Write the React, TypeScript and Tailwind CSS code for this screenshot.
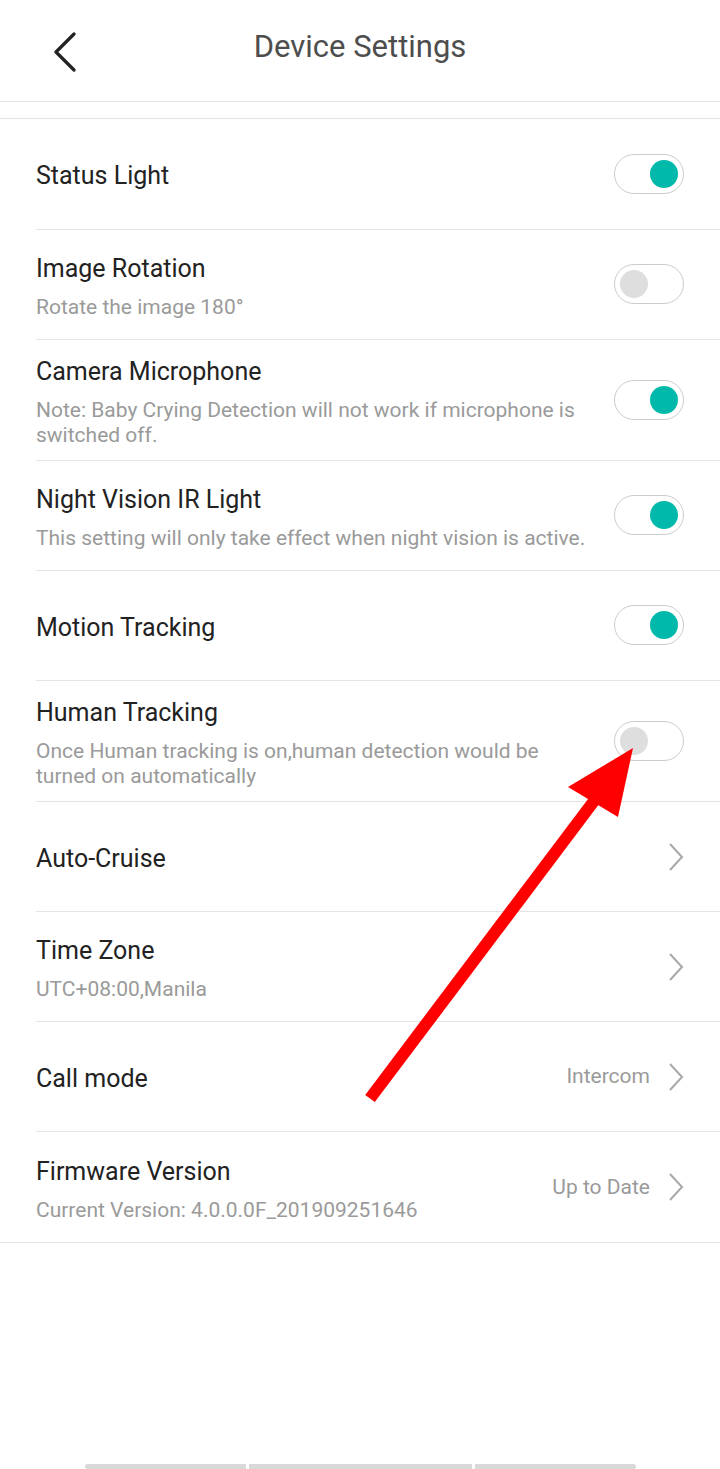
import React from "react";

type Row = {
  label: string;
  desc?: string;
  kind: "toggle" | "link";
  on?: boolean;
  value?: string;
};

const rows: Row[] = [
  { label: "Status Light", kind: "toggle", on: true },
  { label: "Image Rotation", desc: "Rotate the image 180°", kind: "toggle", on: false },
  {
    label: "Camera Microphone",
    desc: "Note: Baby Crying Detection will not work if microphone is switched off.",
    kind: "toggle",
    on: true,
  },
  {
    label: "Night Vision IR Light",
    desc: "This setting will only take effect when night vision is active.",
    kind: "toggle",
    on: true,
  },
  { label: "Motion Tracking", kind: "toggle", on: true },
  {
    label: "Human Tracking",
    desc: "Once Human tracking is on,human detection would be turned on automatically",
    kind: "toggle",
    on: false,
  },
  { label: "Auto-Cruise", kind: "link" },
  { label: "Time Zone", desc: "UTC+08:00,Manila", kind: "link" },
  { label: "Call mode", kind: "link", value: "Intercom" },
  {
    label: "Firmware Version",
    desc: "Current Version: 4.0.0.0F_201909251646",
    kind: "link",
    value: "Up to Date",
  },
];

function Toggle({ on }: { on?: boolean }) {
  return (
    <div
      className={`mt-[-4px] flex h-[40px] w-[70px] shrink-0 items-center rounded-full border border-[#cccccc] bg-white px-[5px] ${
        on ? "justify-end" : "justify-start"
      }`}
    >
      <div
        className={`h-[28px] w-[28px] rounded-full ${on ? "bg-[#00b9aa]" : "bg-[#dedede]"}`}
      />
    </div>
  );
}

function Chevron() {
  return (
    <svg width="16" height="30" viewBox="0 0 16 30" className="shrink-0">
      <path d="M2 2 L14 15 L2 28" fill="none" stroke="#a8a8a8" strokeWidth="2" />
    </svg>
  );
}

export default function App() {
  return (
    <div
      className="relative flex h-[1469px] w-[720px] flex-col overflow-hidden bg-white"
      style={{ fontFamily: "Roboto, 'Noto Sans', sans-serif" }}
    >
      {/* Header */}
      <div className="grid h-[102px] grid-cols-[120px_1fr_120px] items-center border-b border-[#e4e4e4]">
        <div className="pl-[52px] pt-[2px]">
          <svg width="26" height="40" viewBox="0 0 26 40">
            <path
              d="M22 2 L4 20 L22 38"
              fill="none"
              stroke="#222222"
              strokeWidth="3.2"
              strokeLinecap="round"
              strokeLinejoin="round"
            />
          </svg>
        </div>
        <div className="pb-[8px] text-center text-[31px] leading-[40px] text-[#4d4d4d]">
          Device Settings
        </div>
        <div />
      </div>

      <div className="h-[16px]" />

      {/* List */}
      <div className="border-y border-[#e4e4e4]">
        {rows.map((r, i) => (
          <div
            key={r.label}
            className={`ml-[36px] flex items-center gap-[24px] pb-[12px] pr-[36px] pt-[15px] ${
              i === 0 ? "min-h-[111px]" : "min-h-[110px]"
            } ${i < rows.length - 1 ? "border-b border-[#e4e4e4]" : ""}`}
          >
            <div className="min-w-0 flex-1">
              <div className="text-[25px] leading-[33px] text-[#222222]">{r.label}</div>
              {r.desc && (
                <div className="mt-[10px] text-[21px] leading-[25px] text-[#9a9a9a]">{r.desc}</div>
              )}
            </div>
            {r.kind === "toggle" ? (
              <Toggle on={r.on} />
            ) : (
              <div className="mt-[-3px] flex shrink-0 items-center gap-[18px]">
                {r.value && (
                  <span className="text-[21px] leading-[25px] text-[#9a9a9a]">{r.value}</span>
                )}
                <Chevron />
              </div>
            )}
          </div>
        ))}
      </div>

      <div className="flex-1" />

      {/* Bottom bar */}
      <div className="flex justify-center gap-[3px]">
        <div className="h-[5px] w-[161px] rounded-l-full bg-[#d9d9d9]" />
        <div className="h-[5px] w-[223px] bg-[#d9d9d9]" />
        <div className="h-[5px] w-[161px] rounded-r-full bg-[#d9d9d9]" />
      </div>

      {/* Red annotation arrow */}
      <svg
        className="pointer-events-none absolute left-0 top-0"
        width="720"
        height="1469"
        viewBox="0 0 720 1469"
      >
        <line x1="370" y1="1098.5" x2="597" y2="797" stroke="#ff0000" strokeWidth="12" />
        <polygon points="633,748 568,787 618,817" fill="#ff0000" />
      </svg>
    </div>
  );
}
